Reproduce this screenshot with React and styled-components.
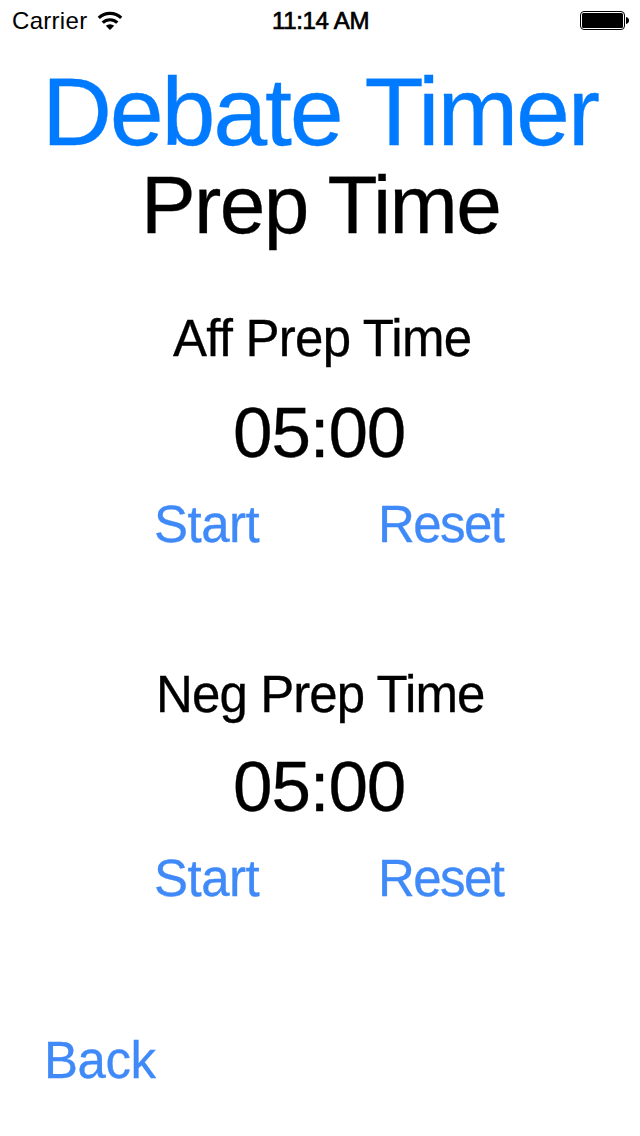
import React from 'react';
import styled, { createGlobalStyle } from 'styled-components';

const GlobalStyle = createGlobalStyle`
  * { box-sizing: border-box; }
  body { margin: 0; background: #fff; font-family: "Liberation Sans", Arial, sans-serif; color: #000; }
  button { border: 0; padding: 0; background: none; font-family: inherit; }
`;

const Screen = styled.main`
  width: 640px;
  height: 1136px;
  display: flex;
  flex-direction: column;
  background: #fff;
  overflow: hidden;
`;

const StatusBar = styled.header`
  height: 40px;
  display: grid;
  grid-template-columns: 1fr auto 1fr;
  align-items: center;
  padding: 1px 11px 0 12px;
`;

const Carrier = styled.div`
  display: flex;
  align-items: center;
  gap: 10px;
`;

const Label = styled.span`
  display: block;
  white-space: nowrap;
  line-height: 1;
  font-size: ${p => p.$size}px;
  letter-spacing: ${p => p.$track || 0}px;
  -webkit-text-stroke: ${p => p.$stroke || 0}px currentColor;
`;

const BatterySlot = styled.div`
  display: flex;
  justify-content: flex-end;
`;

const Title = styled.h1`
  margin: 23px 0 0;
  padding-left: 42px;
  color: #007aff;
  font-weight: 400;
`;

const Subtitle = styled.h2`
  margin: 0;
  padding: 4px 0 0 141px;
  font-weight: 400;
`;

const Timer = styled.section`
  padding-top: ${p => p.$top}px;
`;

const Name = styled.h3`
  margin: 0;
  padding-left: ${p => p.$inset}px;
  font-weight: 400;
`;

const Clock = styled.div`
  padding: ${p => p.$top}px 0 0 233px;
`;

const Actions = styled.div`
  display: grid;
  grid-template-columns: 224px auto;
  justify-content: start;
  justify-items: start;
  padding: 31px 0 0 154px;
`;

const LinkButton = styled.button`
  color: #3f8af8;
`;

const Footer = styled.footer`
  padding: 131px 0 0 44px;
`;

function Wifi() {
  return (
    <svg width="26" height="20" viewBox="0 0 26 20" fill="none" stroke="#000" strokeWidth="3.2">
      <path d="M1.8 6.900a16.2 16.2 0 0 1 22.4 0" />
      <path d="M5.700 11.700a10.500 10.500 0 0 1 14.600 0" />
      <path d="M13 19l-4.200-4.200a6.200 6.200 0 0 1 8.400 0z" fill="#000" stroke="none" />
    </svg>
  );
}

function Battery() {
  return (
    <svg width="49" height="20" viewBox="0 0 49 20">
      <rect x=".5" y=".5" width="44" height="18" rx="3.500" fill="none" stroke="#000" />
      <rect x="2" y="2" width="41" height="15" rx="1.500" />
      <path d="M46 6c4 .5 4 6.500 0 7z" />
    </svg>
  );
}

function PrepTimer({ name, top, inset, track, clockTop }) {
  return (
    <Timer $top={top}>
      <Name $inset={inset}><Label $size={51} $track={track} $stroke={0.3}>{name}</Label></Name>
      <Clock $top={clockTop}><Label $size={71} $track={-1.1} $stroke={0.3}>05:00</Label></Clock>
      <Actions>
        <LinkButton><Label $size={51} $track={-0.5} $stroke={0.3}>Start</Label></LinkButton>
        <LinkButton><Label $size={51} $track={-1.6} $stroke={0.3}>Reset</Label></LinkButton>
      </Actions>
    </Timer>
  );
}

export default function App() {
  return (
    <Screen>
      <GlobalStyle />
      <StatusBar>
        <Carrier><Label $size={24} $track={0.3}>Carrier</Label><Wifi /></Carrier>
        <Label $size={24} $track={-0.3} $stroke={0.7}>11:14 AM</Label>
        <BatterySlot><Battery /></BatterySlot>
      </StatusBar>
      <Title><Label $size={97} $track={-2.2} $stroke={0.3}>Debate Timer</Label></Title>
      <Subtitle><Label $size={82} $track={-1.6} $stroke={0.3}>Prep Time</Label></Subtitle>
      <PrepTimer name="Aff Prep Time" top={67} inset={173} track={-0.75} clockTop={33} />
      <PrepTimer name="Neg Prep Time" top={119} inset={156} track={-0.9} clockTop={31} />
      <Footer><LinkButton><Label $size={51} $track={-0.5} $stroke={0.3}>Back</Label></LinkButton></Footer>
    </Screen>
  );
}
